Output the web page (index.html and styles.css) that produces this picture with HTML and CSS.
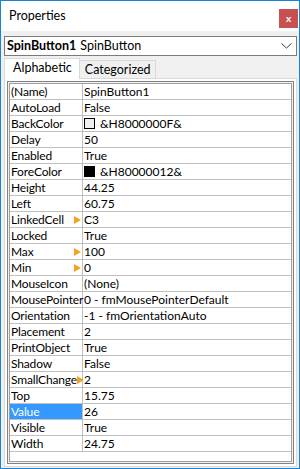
FILE: index.html
```html
<!DOCTYPE html>
<html>
<head>
<meta charset="utf-8">
<link rel="stylesheet" href="styles.css">
</head>
<body>
<div class="window">
  <div class="titlebar">
    <span class="title">Properties</span>
    <div class="close">x</div>
  </div>
  <div class="body">
    <div class="combo">
      <span class="obj-name">SpinButton1</span>
      <span class="obj-type">SpinButton</span>
      <svg class="chev" width="11" height="6" viewBox="0 0 11 6"><path d="M0.5 0.5 L5.5 5 L10.5 0.5" fill="none" stroke="#3c3c3c" stroke-width="1"/></svg>
    </div>
    <div class="tabs">
      <div class="tab active">Alphabetic</div>
      <div class="tab">Categorized</div>
    </div>
    <div class="panel">
      <div class="grid">
        <div class="row"><div class="name"><span class="label">(Name)</span></div><div class="val">SpinButton1</div></div>
        <div class="row"><div class="name"><span class="label">AutoLoad</span></div><div class="val">False</div></div>
        <div class="row"><div class="name"><span class="label">BackColor</span></div><div class="val"><span class="swatch light"></span>&amp;H8000000F&amp;</div></div>
        <div class="row"><div class="name"><span class="label">Delay</span></div><div class="val">50</div></div>
        <div class="row"><div class="name"><span class="label">Enabled</span></div><div class="val">True</div></div>
        <div class="row"><div class="name"><span class="label">ForeColor</span></div><div class="val"><span class="swatch dark"></span>&amp;H80000012&amp;</div></div>
        <div class="row"><div class="name"><span class="label">Height</span></div><div class="val">44.25</div></div>
        <div class="row"><div class="name"><span class="label">Left</span></div><div class="val">60.75</div></div>
        <div class="row"><div class="name"><span class="label">LinkedCell</span><span class="tri"></span></div><div class="val">C3</div></div>
        <div class="row"><div class="name"><span class="label">Locked</span></div><div class="val">True</div></div>
        <div class="row"><div class="name"><span class="label">Max</span><span class="tri"></span></div><div class="val">100</div></div>
        <div class="row"><div class="name"><span class="label">Min</span><span class="tri"></span></div><div class="val">0</div></div>
        <div class="row"><div class="name"><span class="label">MouseIcon</span></div><div class="val">(None)</div></div>
        <div class="row"><div class="name"><span class="label">MousePointer</span></div><div class="val">0 - fmMousePointerDefault</div></div>
        <div class="row"><div class="name"><span class="label">Orientation</span></div><div class="val">-1 - fmOrientationAuto</div></div>
        <div class="row"><div class="name"><span class="label">Placement</span></div><div class="val">2</div></div>
        <div class="row"><div class="name"><span class="label">PrintObject</span></div><div class="val">True</div></div>
        <div class="row"><div class="name"><span class="label">Shadow</span></div><div class="val">False</div></div>
        <div class="row"><div class="name"><span class="label">SmallChange</span><span class="tri"></span></div><div class="val">2</div></div>
        <div class="row"><div class="name"><span class="label">Top</span></div><div class="val">15.75</div></div>
        <div class="row"><div class="name selected"><span class="label">Value</span></div><div class="val">26</div></div>
        <div class="row"><div class="name"><span class="label">Visible</span></div><div class="val">True</div></div>
        <div class="row"><div class="name"><span class="label">Width</span></div><div class="val">24.75</div></div>
      </div>
    </div>
  </div>
</div>
</body>
</html>
```
FILE: styles.css
```css
* { box-sizing: border-box; }
html, body { margin: 0; padding: 0; }
body {
  font-family: Lato, Roboto, sans-serif;
  font-size: 12px;
  color: #000;
}
.window {
  width: 300px;
  height: 469px;
  border: 1px solid #1883d7;
  display: flex;
  flex-direction: column;
  background: #f0f0f0;
}
.titlebar {
  height: 30px;
  background: #fff;
  display: flex;
  align-items: center;
  justify-content: space-between;
  padding: 0 1px 0 8px;
}
.title {
  font-size: 12.5px;
  line-height: 16px;
}
.close {
  width: 19px;
  height: 19px;
  margin-top: 4px;
  background: #c75050;
  color: #fff;
  font-weight: bold;
  font-size: 10px;
  line-height: 18px;
  text-align: center;
}
.body {
  flex: 1;
  display: flex;
  flex-direction: column;
  padding: 5px 2px 0 3px;
  min-height: 0;
}
.combo {
  height: 20px;
  border: 1px solid #7a7a7a;
  background: #fff;
  display: flex;
  align-items: center;
  padding: 0 0 0 2px;
  line-height: 16px;
  font-size: 12.5px;
}
.obj-name { font-weight: bold; }
.obj-type { margin-left: 4px; }
.chev { margin-left: auto; margin-right: 4px; }
.tabs {
  display: flex;
  align-items: flex-end;
  height: 21px;
  margin-top: 1px;
  position: relative;
  z-index: 1;
  font-size: 12.5px;
}
.tab {
  height: 18px;
  border: 1px solid #d9d9d9;
  border-bottom: none;
  background: #f0f0f0;
  padding: 0 4px 0 5px;
  line-height: 17px;
}
.tab.active {
  height: 21px;
  background: #fff;
  padding: 0 7px 0 8px;
  margin-bottom: -1px;
  line-height: 18px;
}
.tab + .tab { border-left: none; }
.panel {
  flex: 1;
  border: 1px solid #d9d9d9;
  background: #fff;
  padding: 2px;
  margin-bottom: 1px;
  display: flex;
  min-height: 0;
}
.grid {
  flex: 1;
  border: 1px solid #828282;
  box-shadow: inset 0 0 0 1px #f0f0f0, inset 0 0 0 2px #a0a0a0;
  padding: 2px;
  background: #fff;
  display: flex;
  flex-direction: column;
}
.row {
  display: flex;
  height: 16px;
  border-bottom: 1px solid #c0c0c0;
  flex-shrink: 0;
}
.name {
  width: 73px;
  flex-shrink: 0;
  border-right: 1px solid #c0c0c0;
  padding-left: 1px;
  line-height: 15px;
  display: flex;
  align-items: center;
  white-space: nowrap;
  letter-spacing: -0.15px;
}
.name.selected {
  background: #3399ff;
  color: #fff;
}
.val {
  flex: 1;
  padding-left: 1px;
  line-height: 15px;
  display: flex;
  align-items: center;
  white-space: nowrap;
}
.tri {
  margin-left: auto;
  margin-right: 1px;
  flex-shrink: 0;
  width: 0;
  height: 0;
  border-top: 4px solid transparent;
  border-bottom: 4px solid transparent;
  border-left: 7px solid #f4a21f;
}
.swatch {
  width: 11px;
  height: 11px;
  border: 1px solid #000;
  margin-right: 5px;
}
.swatch.light { background: #f0f0f0; }
.swatch.dark { background: #000; }
```
